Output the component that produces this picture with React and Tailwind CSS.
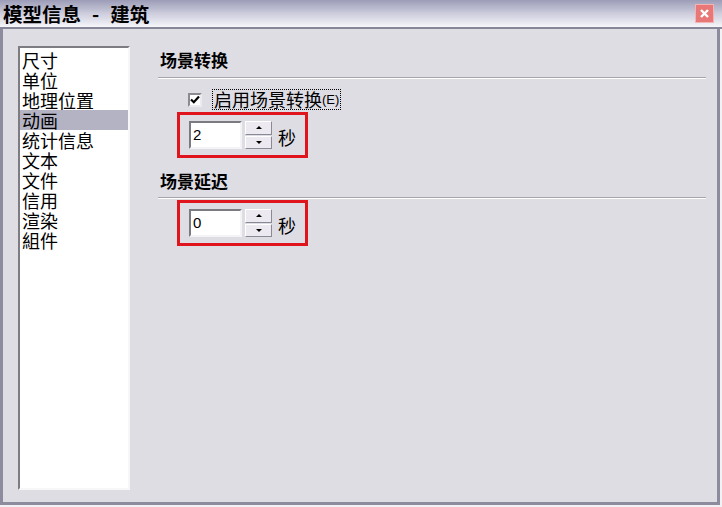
import React from 'react';

const cjk = { fontFamily: '"Noto Sans CJK SC", "Noto Sans", sans-serif' };
const latin = { fontFamily: '"Liberation Sans", Arial, sans-serif' };

const items = ['尺寸', '单位', '地理位置', '动画', '统计信息', '文本', '文件', '信用', '渲染', '組件'];

function Spinner() {
  return (
    <div className="flex flex-col w-[27px] h-[28px] gap-[1px]">
      <div className="flex-1 flex items-center justify-center bg-[#eceaf0] border border-t-white border-l-white border-r-[#8a8a96] border-b-[#8a8a96]">
        <div className="w-0 h-0 border-l-[3px] border-r-[3px] border-b-[3px] border-l-transparent border-r-transparent border-b-black" />
      </div>
      <div className="flex-1 flex items-center justify-center bg-[#eceaf0] border border-t-white border-l-white border-r-[#8a8a96] border-b-[#8a8a96]">
        <div className="w-0 h-0 border-l-[3px] border-r-[3px] border-t-[3px] border-l-transparent border-r-transparent border-t-black" />
      </div>
    </div>
  );
}

function NumberBox({ value }) {
  return (
    <div className="flex items-center border-[3px] border-[#e0141c] pl-[9px] pr-[8px] py-[6px] w-[131px]">
      <div className="w-[53px] h-[28px] bg-white border-2 border-t-[#7a7a80] border-l-[#7a7a80] border-r-[#f4f4f6] border-b-[#f4f4f6] flex items-center pl-[2px] text-[15px] text-black" style={latin}>
        {value}
      </div>
      <div className="ml-[3px]">
        <Spinner />
      </div>
      <span className="ml-[6px] text-[18px] leading-[20px] text-black mt-[4px]">秒</span>
    </div>
  );
}

function Heading({ title }) {
  return <h2 className="text-[17px] font-bold leading-[20px] pl-[2px] text-black">{title}</h2>;
}

export default function App() {
  return (
    <div className="w-[722px] h-[507px] bg-[#f2f2f5] flex flex-col overflow-hidden" style={cjk}>
      {/* Title bar */}
      <div className="h-[29px] shrink-0 flex items-center justify-between pl-[3px] pr-[8px] bg-gradient-to-b from-[#9c9cb7] via-[#cdcddd] to-[#f5f5f9] border-b-2 border-[#868698]">
        <div className="flex items-center text-[19.5px] font-bold text-black leading-none">
          <span>模型信息</span>
          <span className="mx-[11px]">-</span>
          <span>建筑</span>
        </div>
        <div className="w-[19px] h-[19px] bg-[#e87878] border border-[#f4b4b4] flex items-center justify-center">
          <svg width="11" height="11" viewBox="0 0 11 11">
            <path d="M2 2 L9 9 M9 2 L2 9" stroke="white" strokeWidth="2.4" />
          </svg>
        </div>
      </div>

      {/* Body */}
      <div className="flex-1 flex bg-[#dedde4] border-l-[3px] border-r-[3px] border-b-[3px] border-[#8c8c9e] mr-[2px] mb-[2px] pl-[15px] pt-[17px] pb-[12px]">
        {/* List */}
        <div className="w-[112px] h-full bg-white border-2 border-t-[#7c7c82] border-l-[#7c7c82] border-r-[#f7f7f7] border-b-[#f7f7f7] pt-[2px]">
          {items.map((it) => (
            <div
              key={it}
              className={`h-[20px] leading-[20px] text-[18px] text-black pl-[2px] whitespace-nowrap ${it === '动画' ? 'bg-[#b4b3c4]' : ''}`}
            >
              {it}
            </div>
          ))}
        </div>

        {/* Right panel */}
        <div className="flex-1 ml-[28px] mr-[11px] pt-[4px]">
          <Heading title="场景转换" />
          <div className="mt-[7px] border-t border-[#a4a4ac] border-b border-b-white" />

          <div className="flex items-center mt-[10px] ml-[30px]">
            <div className="w-[14px] h-[14px] bg-white border-2 border-t-[#8a8a90] border-l-[#8a8a90] border-r-[#ececf0] border-b-[#ececf0] flex items-center justify-center">
              <svg width="10" height="9" viewBox="0 0 10 9">
                <path d="M1 4.5 L3.8 7.2 L9 1.5" stroke="black" strokeWidth="2.2" fill="none" />
              </svg>
            </div>
            <div className="ml-[10px] border border-dotted border-black px-[1px] h-[21px] flex items-center">
              <span className="text-[18px] leading-[19px] text-black">启用场景转换</span>
              <span className="text-[13px] text-black" style={latin}>(E)</span>
            </div>
          </div>

          <div className="mt-[2px] ml-[19px]">
            <NumberBox value="2" />
          </div>

          <div className="mt-[13px]">
            <Heading title="场景延迟" />
          </div>
          <div className="mt-[6px] border-t border-[#a4a4ac] border-b border-b-white" />

          <div className="mt-[1px] ml-[19px]">
            <NumberBox value="0" />
          </div>
        </div>
      </div>
    </div>
  );
}
